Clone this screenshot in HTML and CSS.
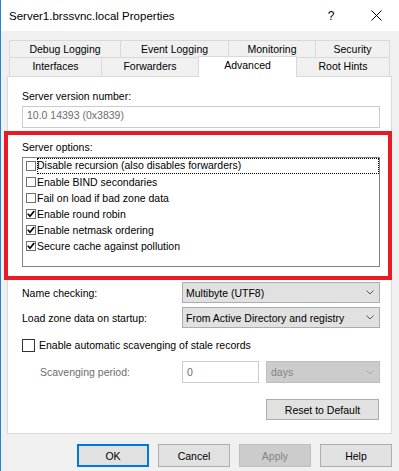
FILE: index.html
```html
<!DOCTYPE html>
<html lang="en">
<head>
    <meta charset="UTF-8">
    <title>Server1.brssvnc.local Properties</title>
    <link rel="stylesheet" href="styles.css">
</head>
<body>
    <div class="window">
        <div class="titlebar">
            <span class="title">Server1.brssvnc.local Properties</span>
            <span class="caption-btn help-btn">?</span>
            <span class="caption-btn close-btn">
                <svg width="11" height="11" viewBox="0 0 11 11"><path d="M0.5 0.5 L10.5 10.5 M10.5 0.5 L0.5 10.5" stroke="#000" stroke-width="1" fill="none"/></svg>
            </span>
        </div>

        <div class="dialog">
            <div class="tabs">
                <div class="tab-row">
                    <div class="tab t-debug">Debug Logging</div>
                    <div class="tab t-event">Event Logging</div>
                    <div class="tab t-monitor">Monitoring</div>
                    <div class="tab t-security">Security</div>
                </div>
                <div class="tab-row lower">
                    <div class="tab t-interfaces">Interfaces</div>
                    <div class="tab t-forwarders">Forwarders</div>
                    <div class="tab t-advanced selected">Advanced</div>
                    <div class="tab t-roothints">Root Hints</div>
                </div>
            </div>

            <div class="panel">
                <div class="label">Server version number:</div>
                <div class="textbox readonly">10.0 14393 (0x3839)</div>

                <div class="label options-label">Server options:</div>
                <div class="listbox">
                    <div class="list-item focused">
                        <span class="list-check"></span>
                        <span class="item-text">Disable recursion (also disables forwarders)</span>
                    </div>
                    <div class="list-item">
                        <span class="list-check"></span>
                        <span class="item-text">Enable BIND secondaries</span>
                    </div>
                    <div class="list-item">
                        <span class="list-check"></span>
                        <span class="item-text">Fail on load if bad zone data</span>
                    </div>
                    <div class="list-item">
                        <span class="list-check"><svg width="8" height="8" viewBox="0 0 8 8"><path d="M0.8 3.8 L3 6.2 L7.2 1" stroke="#000" stroke-width="1.7" fill="none"/></svg></span>
                        <span class="item-text">Enable round robin</span>
                    </div>
                    <div class="list-item">
                        <span class="list-check"><svg width="8" height="8" viewBox="0 0 8 8"><path d="M0.8 3.8 L3 6.2 L7.2 1" stroke="#000" stroke-width="1.7" fill="none"/></svg></span>
                        <span class="item-text">Enable netmask ordering</span>
                    </div>
                    <div class="list-item">
                        <span class="list-check"><svg width="8" height="8" viewBox="0 0 8 8"><path d="M0.8 3.8 L3 6.2 L7.2 1" stroke="#000" stroke-width="1.7" fill="none"/></svg></span>
                        <span class="item-text">Secure cache against pollution</span>
                    </div>
                </div>

                <div class="field-row first-field">
                    <span class="field-label">Name checking:</span>
                    <div class="select">
                        <span>Multibyte (UTF8)</span>
                        <svg class="chevron" width="8" height="5" viewBox="0 0 8 5"><polyline points="0.5,0.5 4,4 7.5,0.5" fill="none" stroke="#555" stroke-width="1"/></svg>
                    </div>
                </div>
                <div class="field-row second-field">
                    <span class="field-label">Load zone data on startup:</span>
                    <div class="select">
                        <span>From Active Directory and registry</span>
                        <svg class="chevron" width="8" height="5" viewBox="0 0 8 5"><polyline points="0.5,0.5 4,4 7.5,0.5" fill="none" stroke="#555" stroke-width="1"/></svg>
                    </div>
                </div>

                <div class="check-row">
                    <span class="checkbox"></span>
                    <span>Enable automatic scavenging of stale records</span>
                </div>

                <div class="scav-row">
                    <span class="field-label scav-label">Scavenging period:</span>
                    <div class="textbox scav-input">0</div>
                    <div class="select disabled days-select">
                        <span>days</span>
                        <svg class="chevron" width="8" height="5" viewBox="0 0 8 5"><polyline points="0.5,0.5 4,4 7.5,0.5" fill="none" stroke="#a8a8a8" stroke-width="1"/></svg>
                    </div>
                </div>

                <div class="reset-row">
                    <div class="button reset-btn">Reset to Default</div>
                </div>
            </div>

            <div class="buttons">
                <div class="button default">OK</div>
                <div class="button">Cancel</div>
                <div class="button disabled">Apply</div>
                <div class="button">Help</div>
            </div>
        </div>

        <div class="highlight"></div>
    </div>
</body>
</html>
```

FILE: styles.css
```css
* {
    box-sizing: border-box;
}

body {
    margin: 0;
    width: 399px;
    height: 471px;
    overflow: hidden;
    background-color: #f0f0f0;
    font-family: "Liberation Sans", Arial, sans-serif;
    font-size: 10.5px;
    color: #000;
}

.window {
    position: relative;
    height: 471px;
    border-left: 1px solid #2a7fd4;
    display: flex;
    flex-direction: column;
}

/* title bar */
.titlebar {
    height: 31px;
    flex-shrink: 0;
    background-color: #fff;
    display: flex;
    align-items: center;
}

.title {
    flex: 1;
    padding-left: 8px;
    font-size: 11.5px;
}

.caption-btn {
    height: 31px;
    display: flex;
    align-items: center;
    justify-content: center;
}

.help-btn {
    width: 46px;
    font-size: 12px;
}

.close-btn {
    width: 45px;
}

/* dialog */
.dialog {
    padding: 9px 0 0 6px;
}

.tabs {
    margin-left: 2px;
}

.tab-row {
    display: flex;
}

.tab {
    height: 17px;
    line-height: 16px;
    margin-left: -1px;
    border: 1px solid #d9d9d9;
    border-bottom: none;
    text-align: center;
    white-space: nowrap;
}

.tab:first-child {
    margin-left: 0;
}

.tab-row.lower .tab {
    height: 19px;
    line-height: 17px;
}

.tab-row.lower .tab.selected {
    height: 21px;
    margin-top: -1px;
    margin-bottom: -1px;
    background-color: #fff;
    position: relative;
    z-index: 1;
}

.t-debug { width: 112px; }
.t-event { width: 109px; }
.t-monitor { width: 88px; }
.t-security { width: 75px; }
.t-interfaces { width: 93px; }
.t-forwarders { width: 98px; }
.t-advanced { width: 99px; }
.t-roothints { width: 94px; }

.panel {
    width: 385px;
    height: 358px;
    padding: 12px 11px 0 14px;
    background-color: #fff;
    border: 1px solid #d9d9d9;
    display: flex;
    flex-direction: column;
}

.label {
    line-height: 14px;
}

.options-label {
    margin-top: 12px;
}

.textbox {
    height: 22px;
    margin-top: 3px;
    padding: 1px 4px 0;
    line-height: 14px;
    background-color: #fff;
    border: 1px solid #cccccc;
    color: #6d6d6d;
}

/* server options list */
.listbox {
    height: 110px;
    margin-top: 3px;
    border: 1px solid #828282;
}

.list-item {
    height: 16px;
    display: flex;
    align-items: center;
}

.list-check {
    width: 10px;
    height: 10px;
    margin-left: 3px;
    border: 1px solid #707070;
    background-color: #fff;
    display: flex;
    align-items: center;
    justify-content: center;
    flex-shrink: 0;
}

.item-text {
    flex: 1;
    height: 16px;
    line-height: 16px;
    margin-left: 1px;
    white-space: nowrap;
}

.list-item.focused .item-text {
    outline: 1px dotted #000;
    outline-offset: -1px;
    line-height: 15px;
}

/* combo rows */
.field-row {
    height: 21px;
    display: flex;
    align-items: center;
}

.first-field {
    margin-top: 15px;
}

.second-field {
    margin-top: 4px;
}

.field-label {
    width: 160px;
    flex-shrink: 0;
}

.select {
    flex: 1;
    height: 100%;
    padding: 0 5px 0 3px;
    background-color: #e1e1e1;
    border: 1px solid #adadad;
    display: flex;
    align-items: center;
    justify-content: space-between;
    white-space: nowrap;
}

.select.disabled {
    background-color: #cccccc;
    border-color: #bfbfbf;
    color: #838383;
}

.check-row {
    height: 14px;
    margin-top: 10px;
    display: flex;
    align-items: center;
    gap: 4px;
}

.checkbox {
    width: 13px;
    height: 13px;
    border: 1px solid #333;
    background-color: #fff;
}

.scav-row {
    height: 22px;
    margin-top: 9px;
    display: flex;
    align-items: center;
}

.scav-label {
    padding-left: 18px;
    color: #6d6d6d;
}

.scav-input {
    width: 77px;
    height: 22px;
    margin-top: 0;
    padding-top: 3px;
}

.days-select {
    margin-left: 7px;
    padding-left: 4px;
}

.reset-row {
    margin-top: 16px;
    display: flex;
    justify-content: flex-end;
    padding-right: 1px;
}

/* buttons */
.button {
    height: 23px;
    background-color: #e1e1e1;
    border: 1px solid #adadad;
    display: flex;
    align-items: center;
    justify-content: center;
    white-space: nowrap;
}

.reset-btn {
    width: 113px;
    height: 21px;
}

.buttons {
    width: 385px;
    margin-top: 10px;
    display: flex;
    justify-content: flex-end;
    gap: 9px;
}

.buttons .button {
    width: 72px;
}

.button.default {
    border: 2px solid #0078d7;
}

.button.disabled {
    background-color: #cccccc;
    border-color: #bfbfbf;
    color: #838383;
}

/* red annotation box drawn over the options */
.highlight {
    position: absolute;
    left: 3px;
    top: 131px;
    width: 388px;
    height: 149px;
    border: 4px solid #e81c24;
    pointer-events: none;
}
```
